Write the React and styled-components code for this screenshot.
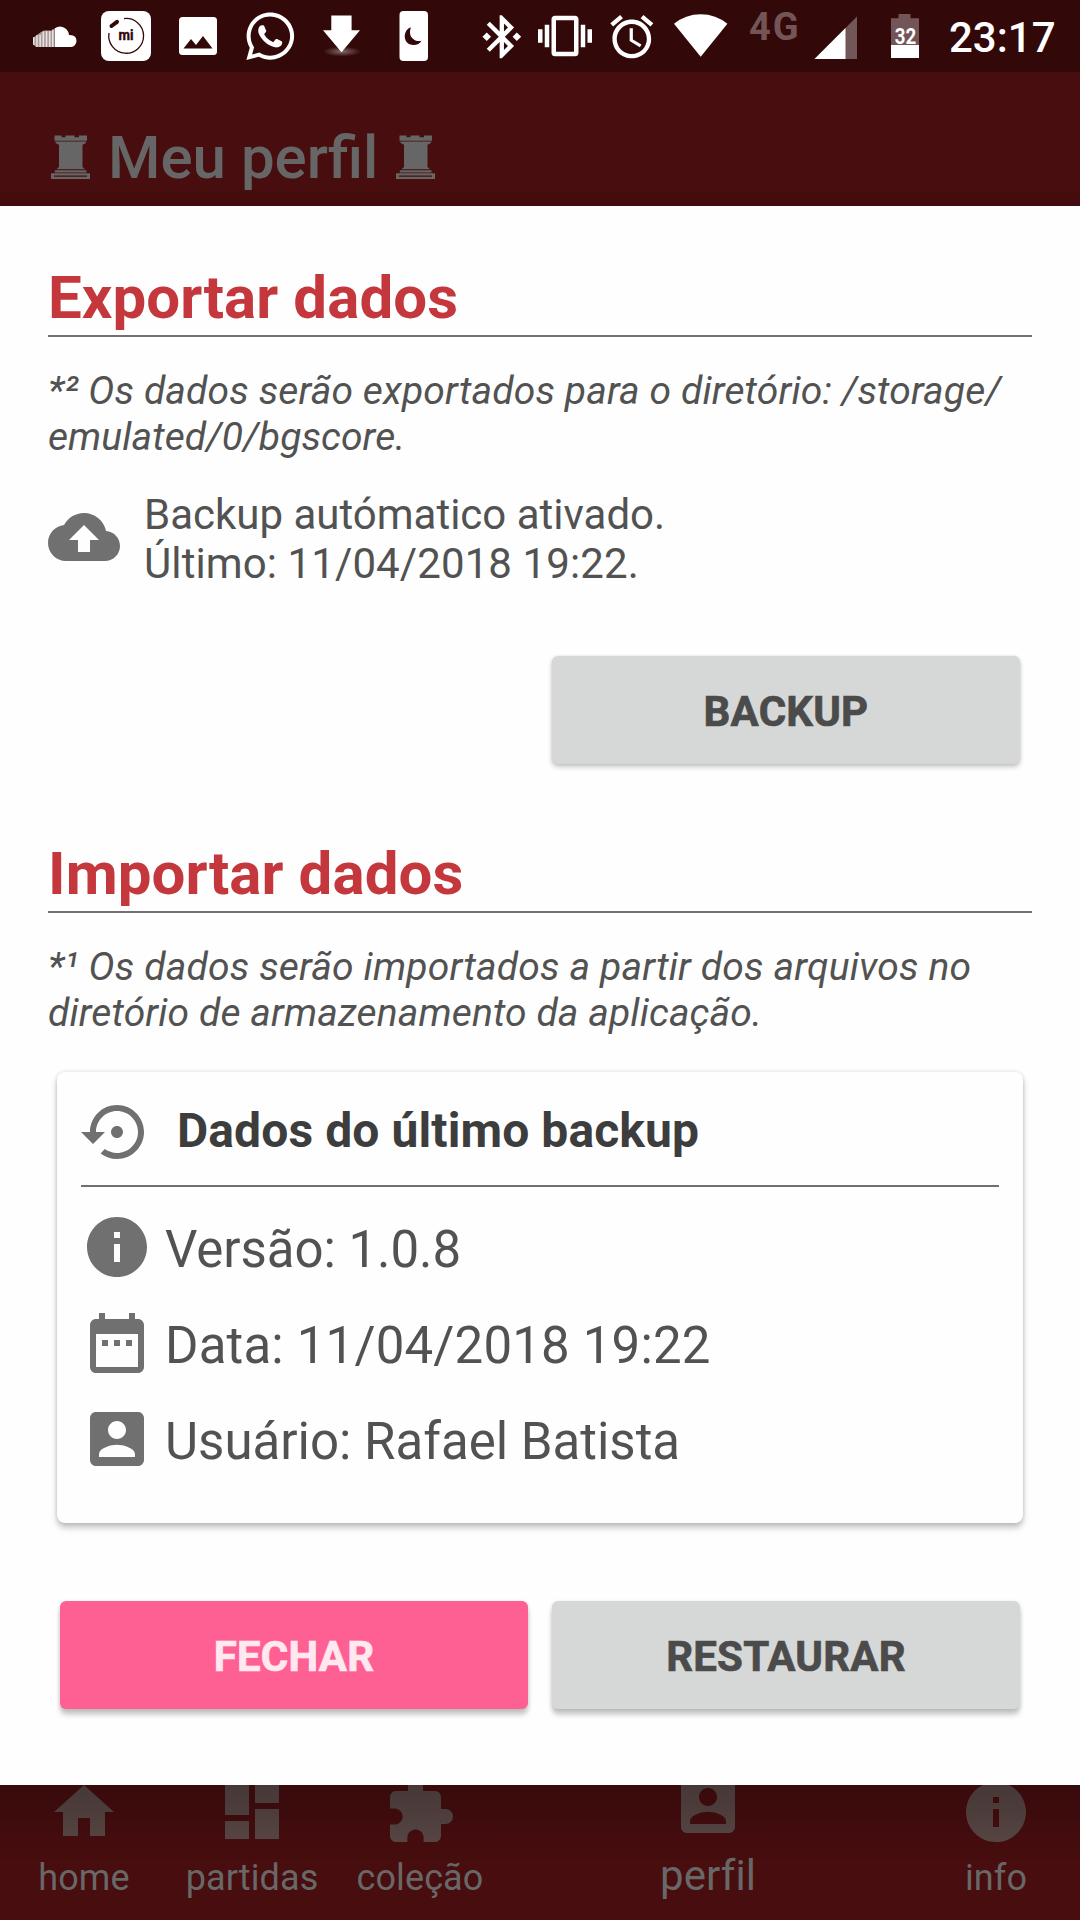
import React from "react";
import styled, { createGlobalStyle, css } from "styled-components";
import { MdBluetoothConnected, MdVibration } from "react-icons/md";
import { FaWhatsapp } from "react-icons/fa";

const GlobalStyle = createGlobalStyle`
  *, *::before, *::after { box-sizing: border-box; }
  body {
    margin: 0;
    background: #480d0f;
    font-family: Roboto, "Liberation Sans", sans-serif;
  }
`;

const Screen = styled.div`
  display: flex;
  flex-direction: column;
  width: 1080px;
  height: 1920px;
  overflow: hidden;
`;

/* ---------- status bar ---------- */

const StatusBar = styled.header`
  display: flex;
  justify-content: space-between;
  height: 72px;
  padding-left: 18px;
  background: #320809;
  color: #fff;
`;

const StatusGroup = styled.div`
  display: flex;
`;

const StatusSlot = styled.div`
  display: flex;
  align-items: center;
  justify-content: center;
  width: ${(p) => p.$width || 72}px;
  height: 72px;
  padding-top: ${(p) => p.$drop || 0}px;

  svg {
    display: block;
    flex: none;
  }
`;

const NetworkLabel = styled.div`
  width: 71px;
  padding: 5px 0 0 13px;
  color: #745557;
  font-size: 38px;
  font-weight: 700;
  line-height: 44px;
  letter-spacing: 2px;
`;

const Clock = styled.time`
  width: 139px;
  padding: 13px 0 0 8px;
  font-size: 42px;
  font-weight: 500;
  line-height: 49px;
  white-space: nowrap;
`;

/* ---------- app bar ---------- */

const AppBar = styled.div`
  display: flex;
  align-items: flex-start;
  height: 134px;
  padding: 51px 0 0 51px;
  background: linear-gradient(#480d0f 0, #480d0f 112px, #420b0d 134px);
  color: #666;
`;

const AppTitle = styled.h1`
  margin: 0 18px;
  font-size: 60px;
  font-weight: 500;
  line-height: 70px;
  white-space: nowrap;
`;

const RookShape = styled.svg`
  flex: none;
  width: 39px;
  height: 44px;
  margin-top: 12px;
`;

/* ---------- dialog ---------- */

const Dialog = styled.main`
  display: flex;
  flex-direction: column;
  height: 1579px;
  padding: 56px 48px 0;
  background: #fefefe;
`;

const SectionHeading = styled.h2`
  margin: ${(p) => p.$top || 0}px 0 0;
  padding: 1px 0 2px;
  border-bottom: 2px solid #727272;
  color: #c4373c;
  font-size: 60px;
  font-weight: 700;
  line-height: 70px;
  letter-spacing: 0.08px;
`;

const Note = styled.p`
  height: 92px;
  margin: 31px 0 -1px;
  color: #525252;
  font-size: 39px;
  font-style: italic;
  line-height: 46px;
  white-space: nowrap;
`;

const Line = styled.span`
  display: block;
  letter-spacing: ${(p) => p.$spacing || 0}px;
`;

const BackupStatus = styled.div`
  display: flex;
  gap: 24px;
  height: 98px;
  margin-top: 31px;
  color: #525252;
  font-size: 42px;
  line-height: 49px;
  white-space: nowrap;

  svg {
    margin-top: 11px;
  }
`;

const Glyph = styled.svg`
  display: block;
  flex: none;
  width: 72px;
  height: 72px;
  fill: ${(p) => p.$color || "#707070"};
`;

const ButtonRow = styled.div`
  display: flex;
  justify-content: flex-end;
  gap: 24px;
  margin-top: ${(p) => p.$top}px;
  padding: 0 12px;
`;

const Button = styled.button`
  width: 468px;
  height: 108px;
  padding: 3px 0 0;
  border: 0;
  border-radius: 6px;
  background: #d6d8d7;
  color: #4b4b4b;
  font: 700 42px/49px Roboto, "Liberation Sans", sans-serif;
  letter-spacing: 0.2px;
  -webkit-text-stroke: 0.7px currentColor;
  box-shadow: 0 3px 5px rgba(0, 0, 0, 0.22), 0 0 3px rgba(0, 0, 0, 0.1);

  ${(p) =>
    p.$raised &&
    css`
      box-shadow: 0 6px 5px rgba(0, 0, 0, 0.2), 0 1px 4px rgba(0, 0, 0, 0.12);
    `}

  ${(p) =>
    p.$accent &&
    css`
      background: #ff6094;
      color: #ffe8ef;
    `}
`;

const Card = styled.section`
  height: 451px;
  margin: 37px 9px 0;
  padding: 24px;
  border-radius: 8px;
  background: #fefefe;
  box-shadow: 0 5px 6px rgba(0, 0, 0, 0.22), 0 0 4px rgba(0, 0, 0, 0.14);
`;

const CardHeader = styled.div`
  display: flex;
  gap: 24px;
  padding-bottom: 17px;
  border-bottom: 2px solid #707070;
`;

const CardTitle = styled.h3`
  margin: 0;
  padding-top: 7px;
  color: #3d3d3d;
  font-size: 48px;
  font-weight: 700;
  line-height: 56px;
  letter-spacing: 0.1px;
  white-space: nowrap;
`;

const Details = styled.div`
  display: flex;
  flex-direction: column;
  gap: 24px;
  padding-top: 24px;
`;

const Detail = styled.div`
  display: flex;
  gap: 12px;
  height: 72px;
  padding-top: 0;
  color: #525252;
  font-size: 51px;
  line-height: 60px;
  white-space: nowrap;
`;

const DetailText = styled.span`
  padding-top: 9px;
  letter-spacing: ${(p) => p.$spacing || 0}px;
`;

/* ---------- bottom navigation ---------- */

const BottomNav = styled.nav`
  position: relative;
  display: grid;
  grid-template-columns: 168px 168px 168px 408px 168px;
  height: 135px;
  overflow: hidden;
  background: #480d0f;

  &::after {
    content: "";
    position: absolute;
    inset: 0 0 auto;
    height: 90px;
    background: linear-gradient(
      rgba(0, 0, 0, 0.22) 0,
      rgba(0, 0, 0, 0.14) 35%,
      rgba(0, 0, 0, 0.05) 62%,
      rgba(0, 0, 0, 0) 100%
    );
  }
`;

const NavItem = styled.div`
  display: flex;
  flex-direction: column;
  align-items: center;
  gap: 9px;
  margin-top: ${(p) => (p.$active ? -15 : -9)}px;
  color: #686868;
  font-size: ${(p) => (p.$active ? 42 : 36)}px;
  line-height: ${(p) => (p.$active ? 49 : 42)}px;
  letter-spacing: 0.1px;
`;

/* ---------- drawings ---------- */

const PATHS = {
  cloud:
    "M19.35 10.04C18.67 6.59 15.64 4 12 4 9.11 4 6.6 5.64 5.35 8.04 2.34 8.36 0 10.91 0 14c0 3.31 2.69 6 6 6h13c2.76 0 5-2.24 5-5 0-2.64-2.05-4.78-4.65-4.96zM14 13v4h-4v-4H7l5-5 5 5h-3z",
  restore:
    "M14 12c0-1.1-.9-2-2-2s-2 .9-2 2 .9 2 2 2 2-.9 2-2zm-2-9c-4.97 0-9 4.03-9 9H0l4 4 4-4H5c0-3.87 3.13-7 7-7s7 3.13 7 7-3.13 7-7 7c-1.51 0-2.91-.49-4.06-1.3l-1.42 1.44C8.04 20.3 9.94 21 12 21c4.97 0 9-4.03 9-9s-4.03-9-9-9z",
  info: "M12 2C6.48 2 2 6.48 2 12s4.48 10 10 10 10-4.48 10-10S17.52 2 12 2zm1 15h-2v-6h2v6zm0-8h-2V7h2v2z",
  calendar:
    "M9 11H7v2h2v-2zm4 0h-2v2h2v-2zm4 0h-2v2h2v-2zm2-7h-1V2h-2v2H8V2H6v2H5c-1.11 0-1.99.9-1.99 2L3 20c0 1.1.89 2 2 2h14c1.1 0 2-.9 2-2V6c0-1.1-.9-2-2-2zm0 16H5V9h14v11z",
  account:
    "M3 5v14c0 1.1.89 2 2 2h14c1.1 0 2-.9 2-2V5c0-1.1-.9-2-2-2H5c-1.11 0-2 .9-2 2zm12 4c0 1.66-1.34 3-3 3s-3-1.34-3-3 1.34-3 3-3 3 1.34 3 3zm-9 8c0-2 4-3.1 6-3.1s6 1.1 6 3.1v1H6v-1z",
  home: "M10 20v-6h4v6h5v-8h3L12 3 2 12h3v8z",
  dashboard: "M3 13h8V3H3v10zm0 8h8v-6H3v6zm10 0h8V11h-8v10zm0-18v6h8V3h-8z",
  puzzle:
    "M20.5 11H19V7c0-1.1-.9-2-2-2h-4V3.5C13 2.12 11.88 1 10.5 1S8 2.12 8 3.5V5H4c-1.1 0-1.99.9-1.99 2v3.8H3.5c1.49 0 2.7 1.21 2.7 2.7s-1.21 2.7-2.7 2.7H2V20c0 1.1.9 2 2 2h3.8v-1.5c0-1.49 1.21-2.7 2.7-2.7 1.49 0 2.7 1.21 2.7 2.7V22H17c1.1 0 2-.9 2-2v-4h1.5c1.38 0 2.5-1.12 2.5-2.5S21.88 11 20.5 11z",
  alarm:
    "M22 5.72l-4.6-3.86-1.29 1.53 4.6 3.86L22 5.72zM7.88 3.39L6.6 1.86 2 5.71l1.29 1.53 4.59-3.85zM12.5 8H11v6l4.75 2.85.75-1.23-4-2.37V8zM12 4c-4.97 0-9 4.03-9 9s4.02 9 9 9c4.97 0 9-4.03 9-9s-4.03-9-9-9zm0 16c-3.87 0-7-3.13-7-7s3.13-7 7-7 7 3.13 7 7-3.13 7-7 7z",
};

const Icon = ({ name, color }) => (
  <Glyph viewBox="0 0 24 24" $color={color} aria-hidden="true">
    <path d={PATHS[name]} />
  </Glyph>
);

const Rook = () => (
  <RookShape viewBox="0 0 39 44" fill="#666" aria-hidden="true">
    <path d="M3.5 .5h7v1.8h4V.5h9v1.8h4.5V.5H36v5.3H3.500z" />
    <path d="M4.500 6.600h30.500v1.500L31.500 9.700V32l2.500 2.300H5.500L8 32V9.700L4.500 8.100z" />
    <path d="M3.800 35.200h31.700v2.300H3.800z" />
    <path fillRule="evenodd" d="M0 38.300h39V44H0zM3 40.500v1.200h33v-1.200z" />
  </RookShape>
);

const SlotDrawing = ({ width = 72, children }) => (
  <svg width={width} height="72" viewBox={`0 0 ${width} 72`} fill="#fff">
    {children}
  </svg>
);

const SoundCloud = () => (
  <SlotDrawing>
    <path d="M15 38l4-3 4-3 3-1.500h8l2-1.500v18H18l-3-3z" opacity=".6" />
    {[
      [15, 37, 45],
      [18.200, 35, 47],
      [21.400, 35, 47],
      [24.600, 31.500, 47],
      [27.800, 31, 47],
      [31, 31, 47],
      [34, 29.500, 47],
    ].map(([x, top, bottom]) => (
      <rect key={x} x={x} y={top} width="1.500" height={bottom - top} opacity=".7" />
    ))}
    <path d="M36.500 28.500Q39 26.500 42.500 26.500Q50 27.500 51 35Q58.500 34.500 58.500 41Q58 46.500 53 47H36.500z" />
  </SlotDrawing>
);

const MiBadge = () => (
  <SlotDrawing>
    <rect x="11" y="11" width="50" height="50" rx="8" />
    <g fill="none" stroke="#320809">
      <path d="M34 18.600A17.400 17.400 0 1 1 19 33" strokeWidth="1.300" />
      <path d="M21.500 26L27 21.800" strokeWidth="4" strokeLinecap="round" />
    </g>
    <text
      x="36"
      y="40"
      fill="#320809"
      stroke="#320809"
      strokeWidth=".4"
      fontFamily="Roboto, sans-serif"
      fontSize="14"
      fontWeight="700"
      textAnchor="middle"
      textLength="15"
      lengthAdjust="spacingAndGlyphs"
    >
      mi
    </text>
  </SlotDrawing>
);

const Picture = () => (
  <SlotDrawing>
    <rect x="17" y="17" width="38" height="38" rx="3.500" />
    <path d="M21.500 48.500l7.500-9.500 5 6 7-9 9.500 12.500z" fill="#320809" />
  </SlotDrawing>
);

const Download = () => (
  <SlotDrawing>
    <defs>
      <radialGradient id="arrowGlow">
        <stop offset="0" stopColor="#fff" stopOpacity=".4" />
        <stop offset="1" stopColor="#fff" stopOpacity="0" />
      </radialGradient>
    </defs>
    <ellipse cx="36" cy="51.500" rx="19" ry="5" fill="url(#arrowGlow)" />
    <path d="M25.300 15.500h20.300v14.800H54L35.500 52.300 17 30.300h8.300z" />
  </SlotDrawing>
);

const NightPhone = () => (
  <SlotDrawing>
    <rect x="21.500" y="11" width="28.500" height="50" rx="4" />
    <path
      d="M33 27.300C25 30 25 41 31 44c5 2.300 10.500.5 12.500-3.300-6 1.600-11.500-2.500-11.500-8.200q0-3 1-5.200z"
      fill="#320809"
    />
  </SlotDrawing>
);

const Wifi = () => (
  <SlotDrawing width={68}>
    <path d="M6 23.800Q17.500 14.200 32.700 14.200T59.400 23.800L32.700 56.800z" />
  </SlotDrawing>
);

const Signal = () => (
  <SlotDrawing width={60}>
    <path d="M50 16.500V59H7.500z" opacity=".32" />
    <path d="M38.500 28V59H7.500z" />
  </SlotDrawing>
);

const Battery = () => (
  <SlotDrawing width={74}>
    <path d="M31.500 14h12v4.300H52V45H24V18.300h7.500z" fill="#745557" />
    <path d="M24 45h28v13H24z" />
    <text
      x="38.500"
      y="43.800"
      fontFamily="Roboto, sans-serif"
      fontSize="21.500"
      fontWeight="700"
      textAnchor="middle"
      textLength="21.500"
      lengthAdjust="spacingAndGlyphs"
    >
      32
    </text>
  </SlotDrawing>
);

const NAV_ITEMS = [
  { icon: "home", label: "home" },
  { icon: "dashboard", label: "partidas" },
  { icon: "puzzle", label: "coleção" },
  { icon: "account", label: "perfil", active: true },
  { icon: "info", label: "info" },
];

const DETAILS = [
  { icon: "info", text: "Versão: 1.0.8", spacing: -0.05 },
  { icon: "calendar", text: "Data: 11/04/2018 19:22", spacing: 0.18 },
  { icon: "account", text: "Usuário: Rafael Batista", spacing: 0 },
];

export default function App() {
  return (
    <Screen>
      <GlobalStyle />
      <StatusBar>
        <StatusGroup>
          <StatusSlot><SoundCloud /></StatusSlot>
          <StatusSlot><MiBadge /></StatusSlot>
          <StatusSlot><Picture /></StatusSlot>
          <StatusSlot $drop={1}><FaWhatsapp size={54.5} /></StatusSlot>
          <StatusSlot><Download /></StatusSlot>
          <StatusSlot><NightPhone /></StatusSlot>
        </StatusGroup>
        <StatusGroup>
          <StatusSlot $width={64} $drop={1}><MdBluetoothConnected size={51.6} /></StatusSlot>
          <StatusSlot $width={61}><MdVibration size={54} /></StatusSlot>
          <StatusSlot $width={73} $drop={2}>
            <svg width="51.6" height="51.6" viewBox="0 0 24 24" fill="#fff">
              <path d={PATHS.alarm} />
            </svg>
          </StatusSlot>
          <StatusSlot $width={68}><Wifi /></StatusSlot>
          <NetworkLabel>4G</NetworkLabel>
          <StatusSlot $width={60}><Signal /></StatusSlot>
          <StatusSlot $width={74}><Battery /></StatusSlot>
          <Clock>23:17</Clock>
        </StatusGroup>
      </StatusBar>

      <AppBar>
        <Rook />
        <AppTitle>Meu perfil</AppTitle>
        <Rook />
      </AppBar>

      <Dialog>
        <SectionHeading>Exportar dados</SectionHeading>
        <Note>
          <Line $spacing={0.14}>
            *² Os dados serão exportados para o diretório: /storage/
          </Line>
          <Line $spacing={0.07}>emulated/0/bgscore.</Line>
        </Note>
        <BackupStatus>
          <Icon name="cloud" />
          <div>
            <Line>Backup autómatico ativado.</Line>
            <Line $spacing={0.1}>Último: 11/04/2018 19:22.</Line>
          </div>
        </BackupStatus>
        <ButtonRow $top={68}>
          <Button>BACKUP</Button>
        </ButtonRow>

        <SectionHeading $top={74}>Importar dados</SectionHeading>
        <Note>
          <Line $spacing={0.18}>
            *¹ Os dados serão importados a partir dos arquivos no
          </Line>
          <Line $spacing={0.12}>diretório de armazenamento da aplicação.</Line>
        </Note>
        <Card>
          <CardHeader>
            <Icon name="restore" />
            <CardTitle>Dados do último backup</CardTitle>
          </CardHeader>
          <Details>
            {DETAILS.map(({ icon, text, spacing }) => (
              <Detail key={icon}>
                <Icon name={icon} />
                <DetailText $spacing={spacing}>{text}</DetailText>
              </Detail>
            ))}
          </Details>
        </Card>
        <ButtonRow $top={78}>
          <Button $accent $raised>FECHAR</Button>
          <Button $raised>RESTAURAR</Button>
        </ButtonRow>
      </Dialog>

      <BottomNav>
        {NAV_ITEMS.map(({ icon, label, active }) => (
          <NavItem key={label} $active={active}>
            <Icon name={icon} color="#5a4846" />
            {label}
          </NavItem>
        ))}
      </BottomNav>
    </Screen>
  );
}
